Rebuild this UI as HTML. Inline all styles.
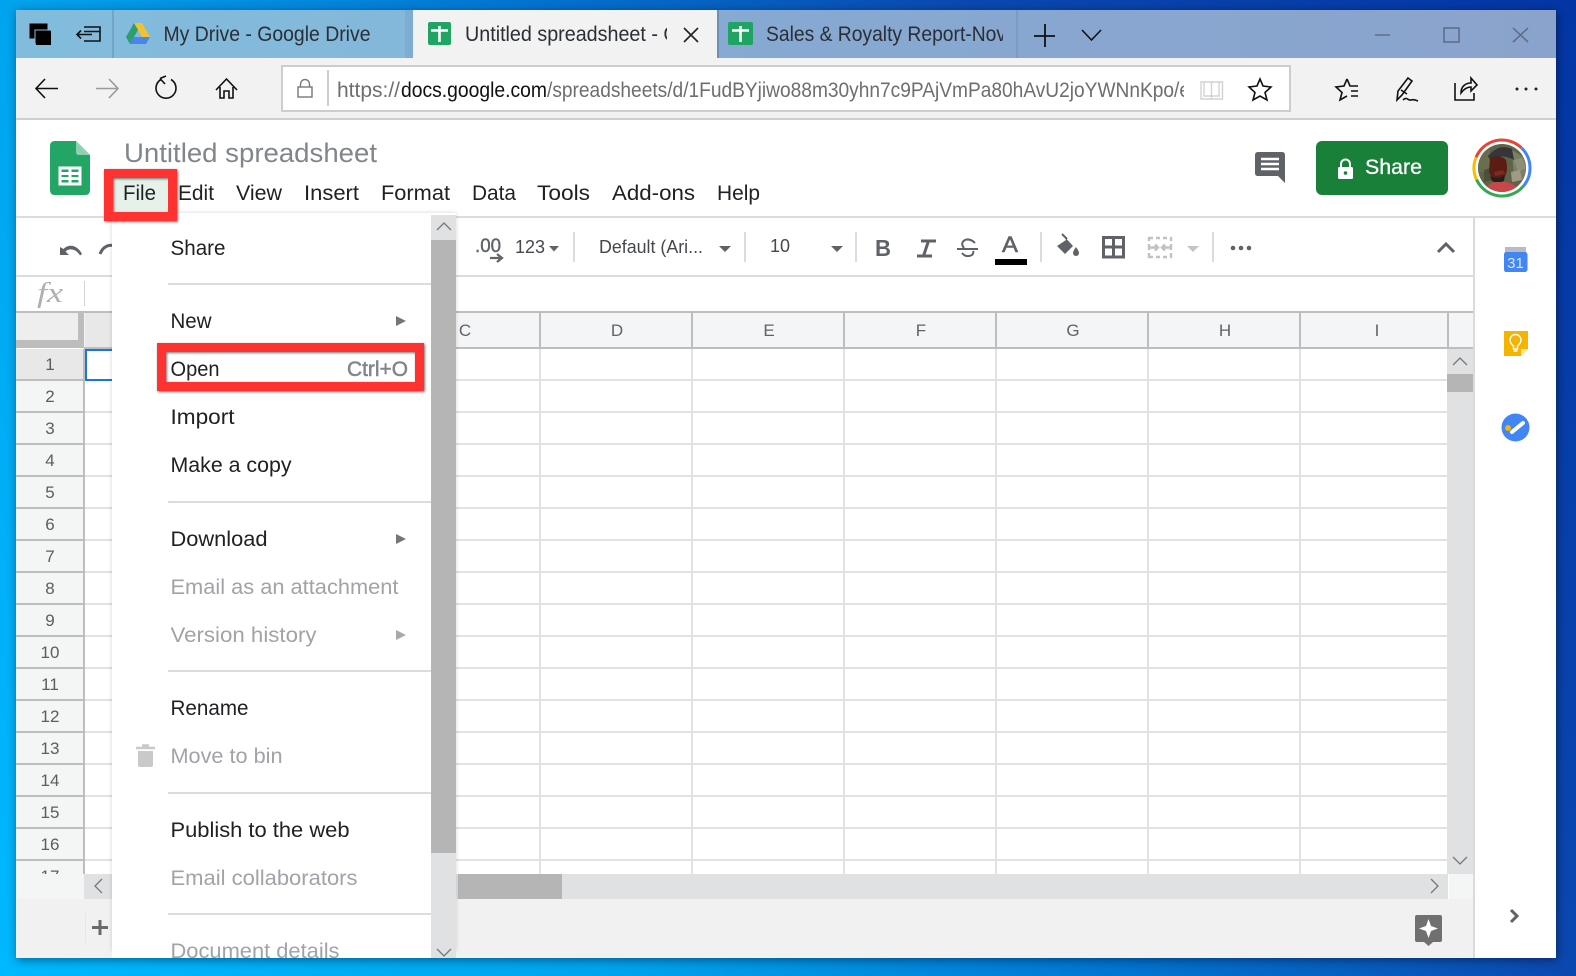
<!DOCTYPE html>
<html lang="en"><head><meta charset="utf-8"><title>Untitled spreadsheet - Google Sheets</title>
<style>
html,body{margin:0;padding:0;width:1576px;height:976px;overflow:hidden;background:#0078d4}
svg{display:block;font-family:"Liberation Sans",sans-serif}
.m{font-size:21px;fill:#202124}
.g{font-size:21px;fill:#a0a3a7}
.r{font-size:17px;fill:#5a5d61;text-anchor:middle}
.c{font-size:17px;fill:#5f6368;text-anchor:middle}
.t{font-size:21px;fill:#2a2f36}
.u{font-size:21.5px;fill:#6e6e6e}
.b{font-size:18px;fill:#45484d}
.ic{fill:none;stroke:#111;stroke-width:1.6}
.wc{fill:none;stroke:#5e6f88;stroke-width:1.6}
</style></head><body>
<svg width="1576" height="976" viewBox="0 0 1576 976" xmlns="http://www.w3.org/2000/svg">
<defs>
<linearGradient id="bg" gradientUnits="userSpaceOnUse" x1="0" y1="976" x2="1576" y2="0">
<stop offset="0" stop-color="#00b8ff"/><stop offset=".28" stop-color="#00a4ee"/><stop offset=".5" stop-color="#0078d4"/><stop offset=".72" stop-color="#0a48b0"/><stop offset="1" stop-color="#0335a5"/></linearGradient>
<linearGradient id="tb" gradientUnits="userSpaceOnUse" x1="16" y1="0" x2="1556" y2="0">
<stop offset="0" stop-color="#82bcdd"/><stop offset=".25" stop-color="#84b8da"/><stop offset=".48" stop-color="#86a9d2"/><stop offset="1" stop-color="#8aa3cc"/></linearGradient>
<filter id="sh" x="-5%" y="-5%" width="110%" height="110%"><feDropShadow dx="1" dy="2" stdDeviation="5" flood-color="#000" flood-opacity=".45"/></filter>
<filter id="rs" x="-20%" y="-30%" width="140%" height="160%"><feDropShadow dx="1" dy="1" stdDeviation="1.2" flood-color="#000" flood-opacity=".55"/></filter>
<filter id="ms" x="-5%" y="-5%" width="110%" height="110%"><feDropShadow dx="0" dy="0" stdDeviation="2" flood-color="#000" flood-opacity=".16"/></filter>
<clipPath id="c1"><rect x="460" y="15" width="207" height="40"/></clipPath>
<clipPath id="c2"><rect x="760" y="15" width="243" height="40"/></clipPath>
<clipPath id="c3"><rect x="335" y="70" width="849" height="38"/></clipPath>
<clipPath id="c4"><rect x="16" y="349" width="67" height="525"/></clipPath>
<clipPath id="c5"><rect x="112" y="213" width="320" height="745"/></clipPath>
<clipPath id="av"><circle cx="1502" cy="168" r="24"/></clipPath>
</defs>
<rect width="1576" height="976" fill="url(#bg)"/>
<rect x="16" y="10" width="1540" height="948" fill="#fff" filter="url(#sh)"/>

<!-- tab strip -->
<rect x="16" y="10" width="1540" height="48" fill="url(#tb)"/>
<path d="M113 10V58M1017 10V58" stroke="#6f95ba" stroke-width="1.2"/>
<rect x="405" y="10" width="8" height="48" fill="#7aa0c8" opacity=".5"/>
<rect x="413" y="10" width="304" height="48" fill="#f2f2f2"/>
<rect x="717" y="10" width="2" height="48" fill="#6f8fb5"/>
<!-- tab set icons -->
<rect x="30" y="24" width="17" height="14" fill="#000" stroke="#000"/>
<rect x="35" y="30" width="16" height="14" fill="#000" stroke="#8ab8d8" stroke-width="1"/>
<rect x="36" y="31" width="15" height="14" fill="#000"/>
<path d="M84 27H100V41H84M84 31.5H100M77 34.5H92M81 30.5L77 34.5L81 38.5" class="ic" stroke-width="1.4"/>
<!-- drive icon -->
<path d="M134 23H142L150 37H142Z" fill="#f1c232"/><path d="M134 23L138 30L130 44L126 37Z" fill="#2f9e6a"/><path d="M133 37H150L146 44H130Z" fill="#4a86e8"/>
<text class="t" x="163.500" y="41" textLength="207" lengthAdjust="spacingAndGlyphs">My Drive - Google Drive</text>
<!-- active tab -->
<rect x="428" y="22" width="23" height="23" rx="2" fill="#1fa463"/><path d="M439.500 26V42M431 30.500H448" stroke="#fff" stroke-width="2.600"/>
<text class="t" x="465" y="41" textLength="262" lengthAdjust="spacingAndGlyphs" clip-path="url(#c1)">Untitled spreadsheet - Google</text>
<path d="M684 28L698 42M698 28L684 42" stroke="#222" stroke-width="1.600" fill="none"/>
<!-- third tab -->
<rect x="728" y="22" width="25" height="23" rx="2" fill="#1fa463"/><path d="M740.500 26V42M732 30.500H749" stroke="#fff" stroke-width="2.600"/>
<text class="t" x="766" y="41" textLength="240" lengthAdjust="spacingAndGlyphs" clip-path="url(#c2)">Sales &amp; Royalty Report-Nov</text>
<path d="M1045 24V47M1034 36H1055" stroke="#111" stroke-width="1.800" fill="none"/>
<path d="M1082 30L1091.500 40L1101 30" class="ic"/>
<path d="M1375 35H1390M1513 28L1528 42M1528 28L1513 42" class="wc"/>
<rect x="1444" y="28" width="15" height="14" class="wc"/>

<!-- nav bar -->
<rect x="16" y="58" width="1540" height="60" fill="#f2f2f2"/>
<rect x="16" y="118" width="1540" height="2" fill="#cfcfcf"/>
<path d="M36 88.500H58M45 79L36 88.500L45 98" class="ic" stroke-width="1.700"/>
<path d="M96 88.500H118M109 79L118 88.500L109 98" class="ic" stroke="#9a9a9a" stroke-width="1.700" style="stroke:#9a9a9a"/>
<path d="M161 79.500A10 10 0 1 0 171 79.500M160 78.500L165 84M160 78.500L166 76" class="ic" stroke-width="1.700"/>
<path d="M216 90L226.500 79L237 90M220 87V98H224V91H229V98H233V87" class="ic" stroke-width="1.800"/>
<rect x="282" y="66" width="1008" height="45" fill="#fff" stroke="#cdcdcd" stroke-width="2"/>
<rect x="298" y="87" width="14" height="10" fill="none" stroke="#777" stroke-width="1.400"/><path d="M300.500 87V84A4.500 4.500 0 0 1 309.500 84V87" fill="none" stroke="#777" stroke-width="1.400"/>
<rect x="327" y="70" width="2" height="36" fill="#ccc"/>
<g clip-path="url(#c3)">
<text class="u" x="337" y="97" textLength="63" lengthAdjust="spacingAndGlyphs">https://</text>
<text class="u" style="fill:#111" x="401" y="97" textLength="146" lengthAdjust="spacingAndGlyphs">docs.google.com</text>
<text class="u" x="547" y="97" textLength="643" lengthAdjust="spacingAndGlyphs">/spreadsheets/d/1FudBYjiwo88m30yhn7c9PAjVmPa80hAvU2joYWNnKpo/e</text>
</g>
<path d="M1201 82H1211.500V99H1201ZM1211.500 82H1222.500V99H1211.500M1204 82V96H1211.500M1219 82V96H1211.500" fill="none" stroke="#d2d2d2" stroke-width="1.400"/>
<path d="M1260 79L1263 86L1271 87L1265 92.500L1267 100L1260 96L1253 100L1255 92.500L1249 87L1257 86Z" class="ic" stroke-width="1.700"/>
<path d="M1347 79L1344 86L1336 87L1342 92.500L1340 100L1347 96M1347 79L1350 86H1358M1351 91H1358M1351 96H1358" class="ic" stroke-width="1.400"/>
<path d="M1397 100L1398 91L1408 78L1412 81L1402 95ZM1401 90L1407 94M1403 100C1407 96 1408 101 1411 100C1414 99 1415 100 1418 101" class="ic" stroke-width="1.400"/>
<path d="M1455 83V100H1474V93M1461 93C1461 86 1466 83 1471 83V78L1477 85L1471 91V87C1467 87 1464 89 1461 93Z" class="ic" stroke-width="1.500"/>
<g fill="#222"><circle cx="1517" cy="89" r="1.500"/><circle cx="1526" cy="89" r="1.500"/><circle cx="1536" cy="89" r="1.500"/></g>

<!-- docs header -->
<path d="M50 146Q50 141 55 141H76L90 155V190Q90 195 85 195H55Q50 195 50 190Z" fill="#23a566"/>
<path d="M76 141L90 155H79Q76 155 76 152Z" fill="#8ed1b1"/>
<path d="M60 168H80V184H60Z" fill="none" stroke="#fff" stroke-width="3"/><path d="M60 173.500H80M60 178.500H80M70 168V184" stroke="#fff" stroke-width="3" fill="none"/>
<text x="124" y="162" font-size="27" fill="#80868b" textLength="253" lengthAdjust="spacingAndGlyphs">Untitled spreadsheet</text>
<g class="menus">
<text class="m" x="123" y="200" textLength="33" lengthAdjust="spacingAndGlyphs">File</text>
<text class="m" x="178" y="200" textLength="36" lengthAdjust="spacingAndGlyphs">Edit</text>
<text class="m" x="236" y="200" textLength="46" lengthAdjust="spacingAndGlyphs">View</text>
<text class="m" x="304" y="200" textLength="55" lengthAdjust="spacingAndGlyphs">Insert</text>
<text class="m" x="381" y="200" textLength="69" lengthAdjust="spacingAndGlyphs">Format</text>
<text class="m" x="472" y="200" textLength="44" lengthAdjust="spacingAndGlyphs">Data</text>
<text class="m" x="537" y="200" textLength="53" lengthAdjust="spacingAndGlyphs">Tools</text>
<text class="m" x="612" y="200" textLength="83" lengthAdjust="spacingAndGlyphs">Add-ons</text>
<text class="m" x="717" y="200" textLength="43" lengthAdjust="spacingAndGlyphs">Help</text>
</g>
<path d="M1258 152H1282Q1285 152 1285 155V183L1278 176H1258Q1255 176 1255 173V155Q1255 152 1258 152Z" fill="#5f6368"/>
<path d="M1261 159H1279M1261 164H1279M1261 169H1279" stroke="#fff" stroke-width="2.600"/>
<rect x="1316" y="141" width="132" height="54" rx="6" fill="#188038"/>
<rect x="1338" y="167" width="15" height="12" rx="1.500" fill="#fff"/><path d="M1341 167V164A4.500 4.500 0 0 1 1350 164V167" fill="none" stroke="#fff" stroke-width="2"/><circle cx="1345.500" cy="173" r="1.800" fill="#188038"/>
<text x="1365" y="174" font-size="21" fill="#fff" stroke="#fff" stroke-width=".3" textLength="57" lengthAdjust="spacingAndGlyphs">Share</text>
<!-- avatar -->
<g fill="none" stroke-width="3">
<path d="M1476.100 157.300A28 28 0 0 1 1521.300 147.700" stroke="#ea4335"/>
<path d="M1521.300 147.700A28 28 0 0 1 1523.400 186.100" stroke="#4285f4"/>
<path d="M1523.400 186.100A28 28 0 0 1 1476.500 179.500" stroke="#34a853"/>
<path d="M1476.500 179.500A28 28 0 0 1 1476.100 157.300" stroke="#fbbc04"/>
</g>
<g clip-path="url(#av)">
<rect x="1478" y="144" width="48" height="48" fill="#5f6348"/>
<path d="M1478 150H1490V172H1478Z" fill="#6a6e50"/>
<path d="M1512 150L1528 160V178L1514 182Z" fill="#7a8062"/>
<path d="M1514 160L1522 158L1526 168L1518 172Z" fill="#8f8f78"/>
<path d="M1511 172L1520 170L1522 180L1512 182Z" fill="#a09a85"/>
<path d="M1484 170L1490 168L1492 180L1484 182Z" fill="#4b5038"/>
<path d="M1488 156Q1499 143 1512 149L1514 160Q1502 153 1490 160Z" fill="#35353a"/>
<path d="M1490 158Q1500 154 1506 160Q1509 172 1503 179Q1492 181 1489 172Z" fill="#5c1c16"/>
<path d="M1494 172L1503 170L1505 174L1495 176Z" fill="#7a2a20"/>
<path d="M1490 176Q1498 180 1505 175L1504 181Q1497 184 1492 181Z" fill="#22201e"/>
<path d="M1484 192Q1488 182 1497 182L1506 182Q1516 184 1520 192Z" fill="#c8474a"/>
</g>

<!-- toolbar -->
<rect x="16" y="216" width="1540" height="2" fill="#dadce0"/>
<rect x="1473" y="216" width="2" height="742" fill="#d9dadc"/>
<rect x="16" y="275" width="1457" height="2" fill="#dadce0"/>
<path d="M60 247V255H69L65.500 251.500C69 248 76 248.500 80 255.500L82 254C77 244 68 244 63.500 249Z" fill="#5f6368"/>
<path d="M100 254C103 246 110 244 114 246" fill="none" stroke="#5f6368" stroke-width="3"/>
<text x="475" y="252" font-size="19" fill="#5f6368" stroke="#5f6368" stroke-width=".4" textLength="26" lengthAdjust="spacingAndGlyphs">.00</text>
<path d="M490 258H500M497 254L502 258L497 262" stroke="#5f6368" stroke-width="2.200" fill="none"/>
<text class="b" x="515" y="253" textLength="30" lengthAdjust="spacingAndGlyphs">123</text>
<path d="M549 246H559L554 251.500ZM719 246H731L725 252ZM831 246H843L837 252Z" fill="#5f6368"/>
<path d="M1187 246H1199L1193 252Z" fill="#c4c4c4"/>
<rect x="573" y="232" width="2" height="30" fill="#dadce0"/><rect x="744" y="232" width="2" height="30" fill="#dadce0"/><rect x="855" y="232" width="2" height="30" fill="#dadce0"/><rect x="1040" y="232" width="2" height="30" fill="#dadce0"/><rect x="1212" y="232" width="2" height="30" fill="#dadce0"/>
<text class="b" x="599" y="253" textLength="104" lengthAdjust="spacingAndGlyphs">Default (Ari...</text>
<text class="b" x="770" y="252" textLength="20" lengthAdjust="spacingAndGlyphs">10</text>
<text x="875" y="256" font-size="23" font-weight="bold" fill="#5f6368" textLength="16" lengthAdjust="spacingAndGlyphs">B</text>
<path d="M921 241H936M917 256H932M928.500 241L923.500 256" stroke="#5f6368" stroke-width="3" fill="none"/>
<path d="M957 249H978M975 243Q970 238 965 240Q960 243 964 248M962 253Q966 258 972 255Q974 253 973 251" stroke="#5f6368" stroke-width="2" fill="none"/>
<text x="1002" y="252" font-size="22" fill="#5f6368" stroke="#5f6368" stroke-width=".6" textLength="16" lengthAdjust="spacingAndGlyphs">A</text>
<rect x="995" y="259" width="32" height="6" fill="#000"/>
<path d="M1063 235L1073 246L1065 254L1057 246L1066 240" fill="#5f6368"/><path d="M1062 234L1067 239" stroke="#5f6368" stroke-width="2"/><path d="M1076 247Q1073 251 1073 253A3 3 0 0 0 1079 253Q1079 251 1076 247Z" fill="#5f6368"/>
<path d="M1103.500 237.500H1123.500V257H1103.500ZM1113.500 237.500V257M1103.500 247H1123.500" fill="none" stroke="#5f6368" stroke-width="3"/>
<path d="M1149 241V238H1153M1156 238H1160M1163 238H1167M1170 238H1171V241M1149 244V250M1171 244V250M1149 253V257H1153M1156 257H1160M1163 257H1167M1170 257H1171V253M1149 247.500H1158M1162 247.500H1171M1155 244.500L1158 247.500L1155 250.500M1165 244.500L1162 247.500L1165 250.500" fill="none" stroke="#c2c2c2" stroke-width="2.400"/>
<g fill="#5f6368"><circle cx="1233" cy="248" r="2.300"/><circle cx="1241" cy="248" r="2.300"/><circle cx="1249" cy="248" r="2.300"/></g>
<path d="M1438 252L1446 244L1454 252" fill="none" stroke="#5f6368" stroke-width="3"/>

<!-- formula bar -->
<text x="37" y="302" font-family="Liberation Serif" font-style="italic" font-size="29" fill="#b0b0b0" textLength="26" lengthAdjust="spacingAndGlyphs">fx</text>
<rect x="84" y="281" width="1" height="25" fill="#d5d5d5"/>

<!-- grid header -->
<rect x="16" y="311" width="1457" height="2" fill="#bdbdbd"/>
<rect x="16" y="313" width="1457" height="35" fill="#f4f5f6"/>
<rect x="16" y="313" width="62" height="27" fill="#eeeeee"/>
<rect x="78" y="313" width="6" height="35" fill="#bdbdbd"/><rect x="16" y="340" width="68" height="8" fill="#bdbdbd"/>
<rect x="85" y="313" width="30" height="35" fill="#e8e8e8"/>
<rect x="84" y="347" width="1389" height="2" fill="#bdbdbd"/>
<path d="M540 312V348M692 312V348M844 312V348M996 312V348M1148 312V348M1300 312V348M1448 312V348" stroke="#bdbdbd" stroke-width="2"/>
<text class="c" x="465" y="336">C</text><text class="c" x="617" y="336">D</text><text class="c" x="769" y="336">E</text><text class="c" x="921" y="336">F</text><text class="c" x="1073" y="336">G</text><text class="c" x="1225" y="336">H</text><text class="c" x="1377" y="336">I</text>
<!-- row header -->
<rect x="16" y="349" width="67" height="525" fill="#f4f5f5"/>
<rect x="16" y="349" width="67" height="31" fill="#e8e8e8"/>
<path d="M16 380H84M16 412H84M16 444H84M16 476H84M16 508H84M16 540H84M16 572H84M16 604H84M16 636H84M16 668H84M16 700H84M16 732H84M16 764H84M16 796H84M16 828H84M16 860H84" stroke="#bdbdbd" stroke-width="2"/>
<rect x="83" y="349" width="2" height="525" fill="#bdbdbd"/>
<g clip-path="url(#c4)">
<text class="r" x="50" y="370">1</text><text class="r" x="50" y="402">2</text><text class="r" x="50" y="434">3</text><text class="r" x="50" y="466">4</text><text class="r" x="50" y="498">5</text><text class="r" x="50" y="530">6</text><text class="r" x="50" y="562">7</text><text class="r" x="50" y="594">8</text><text class="r" x="50" y="626">9</text><text class="r" x="50" y="658">10</text><text class="r" x="50" y="690">11</text><text class="r" x="50" y="722">12</text><text class="r" x="50" y="754">13</text><text class="r" x="50" y="786">14</text><text class="r" x="50" y="818">15</text><text class="r" x="50" y="850">16</text><text class="r" x="50" y="882">17</text>
</g>
<!-- grid -->
<path d="M85 380H1447M85 412H1447M85 444H1447M85 476H1447M85 508H1447M85 540H1447M85 572H1447M85 604H1447M85 636H1447M85 668H1447M85 700H1447M85 732H1447M85 764H1447M85 796H1447M85 828H1447M85 860H1447" stroke="#e2e2e2" stroke-width="2"/>
<path d="M540 349V874M692 349V874M844 349V874M996 349V874M1148 349V874M1300 349V874" stroke="#e2e2e2" stroke-width="2"/>
<rect x="86" y="350" width="40" height="30" fill="none" stroke="#1a73e8" stroke-width="2"/>
<!-- v scrollbar -->
<rect x="1447" y="349" width="26" height="525" fill="#dfe1e3"/>
<rect x="1447" y="374" width="26" height="18" fill="#b5b5b5"/>
<path d="M1453 365L1460 358L1467 365M1453 857L1460 864L1467 857" fill="none" stroke="#777" stroke-width="1.300"/>
<!-- h scrollbar -->
<rect x="16" y="874" width="68" height="25" fill="#f4f5f5"/>
<rect x="84" y="874" width="1364" height="25" fill="#dfe1e3"/>
<rect x="458" y="874" width="104" height="25" fill="#b5b5b5"/>
<rect x="1449" y="874" width="24" height="25" fill="#f4f5f5"/>
<path d="M102 879L95 886L102 893M1431 879L1438 886L1431 893" fill="none" stroke="#777" stroke-width="1.300"/>
<!-- bottom -->
<rect x="16" y="899" width="1457" height="59" fill="#f1f1f1"/>
<rect x="85" y="913" width="1" height="30" fill="#e6e6e6"/>
<path d="M100 920V935M92 927.500H108" stroke="#6a6a6a" stroke-width="3"/>
<path d="M1417 915H1440Q1442 915 1442 917V940Q1442 942 1440 942H1433L1428.500 946L1424 942H1417Q1415 942 1415 940V917Q1415 915 1417 915Z" fill="#707070"/>
<path d="M1428.500 919L1431 926L1438 928.500L1431 931L1428.500 938L1426 931L1419 928.500L1426 926Z" fill="#fff"/>
<!-- side panel -->
<rect x="1475" y="218" width="81" height="740" fill="#fff"/>
<rect x="1505" y="247" width="21" height="6" fill="#b8bcc2"/>
<path d="M1505 252H1526L1527.500 254V270L1526 272H1505L1504 270V254Z" fill="#4285f4"/>
<text x="1515.500" y="268" font-size="15" fill="#dbe7fb" text-anchor="middle">31</text>
<path d="M1504 331H1528V349L1521 356H1504Z" fill="#f4b400"/><path d="M1521 356V349H1528Z" fill="#fbe3a4"/>
<path d="M1513.500 349V346Q1510 343 1510 340A5.500 5.500 0 0 1 1521 340Q1521 343 1517.500 346V349ZM1513.500 351H1517.500" fill="none" stroke="#fff" stroke-width="1.400"/>
<circle cx="1515.500" cy="427.500" r="14" fill="#4285f4"/>
<path d="M1512 432L1523 423" stroke="#fff" stroke-width="4" stroke-linecap="round"/>
<circle cx="1508" cy="428" r="3" fill="#f4b400"/>
<path d="M1511 910L1517 916L1511 922" fill="none" stroke="#5f6368" stroke-width="3"/>

<!-- file menu -->
<rect x="112" y="213" width="344" height="738" fill="#fff" filter="url(#ms)"/>
<rect x="112" y="213" width="344" height="745" fill="#fff"/>
<rect x="431" y="215" width="25" height="743" fill="#dfe1e3"/>
<rect x="431" y="240" width="25" height="613" fill="#b5b5b5"/>
<path d="M437 230L444 223L451 230M437 949L444 956L451 949" fill="none" stroke="#777" stroke-width="1.300"/>
<path d="M168 284H431M168 502H431M168 671H431M168 793H431M168 914H431" stroke="#dadce0" stroke-width="2"/>
<g clip-path="url(#c5)">
<text class="m" x="170.500" y="255" textLength="55" lengthAdjust="spacingAndGlyphs">Share</text>
<text class="m" x="170.500" y="328" textLength="41" lengthAdjust="spacingAndGlyphs">New</text>
<text class="m" x="170.500" y="376" textLength="49" lengthAdjust="spacingAndGlyphs">Open</text>
<text x="347" y="376" font-size="21" fill="#80868b" stroke="#80868b" stroke-width=".5" textLength="61" lengthAdjust="spacingAndGlyphs">Ctrl+O</text>
<text class="m" x="170.500" y="424" textLength="64" lengthAdjust="spacingAndGlyphs">Import</text>
<text class="m" x="170.500" y="472" textLength="121" lengthAdjust="spacingAndGlyphs">Make a copy</text>
<text class="m" x="170.500" y="546" textLength="97" lengthAdjust="spacingAndGlyphs">Download</text>
<text class="g" x="170.500" y="594" textLength="228" lengthAdjust="spacingAndGlyphs">Email as an attachment</text>
<text class="g" x="170.500" y="642" textLength="146" lengthAdjust="spacingAndGlyphs">Version history</text>
<text class="m" x="170.500" y="715" textLength="78" lengthAdjust="spacingAndGlyphs">Rename</text>
<text class="g" x="170.500" y="763" textLength="112" lengthAdjust="spacingAndGlyphs">Move to bin</text>
<text class="m" x="170.500" y="837" textLength="179" lengthAdjust="spacingAndGlyphs">Publish to the web</text>
<text class="g" x="170.500" y="885" textLength="187" lengthAdjust="spacingAndGlyphs">Email collaborators</text>
<text class="g" x="170.500" y="958" textLength="169" lengthAdjust="spacingAndGlyphs">Document details</text>
</g>
<path d="M396 316L406 321L396 326Z M396 534L406 539L396 544Z" fill="#757575"/>
<path d="M396 630L406 635L396 640Z" fill="#a9a9a9"/>
<path d="M138 751H153V765Q153 767 151 767H140Q138 767 138 765Z" fill="#c9c9c9"/>
<path d="M136 748H155M142 745.500H149" stroke="#c9c9c9" stroke-width="2.400" fill="none"/>

<!-- annotation boxes -->
<rect x="113" y="178" width="54" height="34" fill="#e6f1ea"/>
<text class="m" x="123" y="200" textLength="33" lengthAdjust="spacingAndGlyphs">File</text>
<rect x="108.500" y="173.500" width="64" height="43" fill="none" stroke="#ff3333" stroke-width="9" filter="url(#rs)"/>
<rect x="161.500" y="347.500" width="258" height="39" fill="none" stroke="#ff3333" stroke-width="9" filter="url(#rs)"/>
</svg>
</body></html>
